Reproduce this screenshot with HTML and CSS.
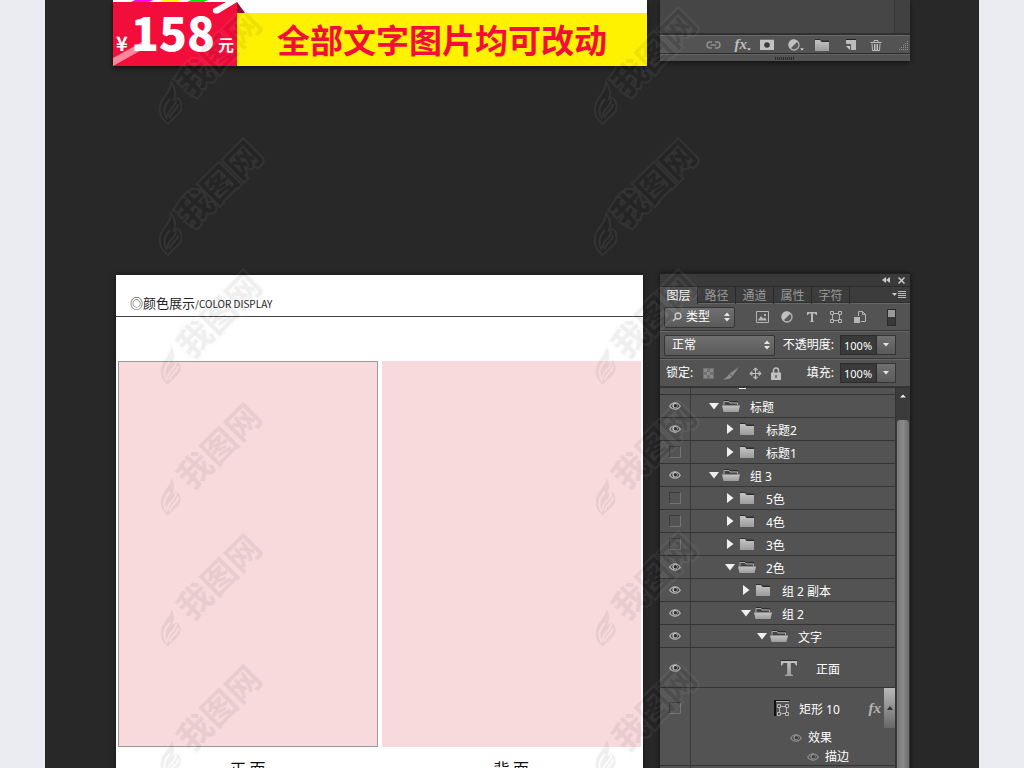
FILE: index.html
```html
<!DOCTYPE html>
<html lang="zh-CN">
<head>
<meta charset="utf-8">
<title>颜色展示</title>
<link rel="stylesheet" href="styles.css">
</head>
<body>
<svg class="defs" aria-hidden="true">
  <defs>
    <linearGradient id="metal" x1="0" y1="0" x2="0" y2="1"><stop offset="0" stop-color="#c4c4c4"/><stop offset="1" stop-color="#9c9c9c"/></linearGradient>
  </defs>
  <symbol id="eye" viewBox="0 0 12 10"><path d="M.7 5.2C3 .6 9 .6 11.3 5.2 9 9 3 9 .7 5.2Z" fill="#4a4a4a" stroke="#b8b8b8" stroke-width="1.200"/><circle cx="6" cy="4.500" r="2.600" fill="#c4c4c4"/><circle cx="6.400" cy="4.800" r="1.700" fill="#2c2c2c"/></symbol>
  <symbol id="box" viewBox="0 0 12 12"><path d="M.5 11.500V.5H11.500" fill="none" stroke="#3c3c3c"/><path d="M11.500 .5V11.500H.5" fill="none" stroke="#747474"/></symbol>
  <symbol id="open" viewBox="0 0 10 10"><path d="M0 2H10L5 8.500Z" fill="#f0f0f0"/></symbol>
  <symbol id="shut" viewBox="0 0 10 10"><path d="M2 0 8.500 5 2 10Z" fill="#f0f0f0"/></symbol>
  <symbol id="folder" viewBox="0 0 18 12"><path d="M2 0H7L8 1.500H16V3H2Z" fill="#2d2d2d"/><path d="M2 1H7L8.500 3H16V12H2Z" fill="url(#metal)"/></symbol>
  <symbol id="folder-open" viewBox="0 0 18 12"><path d="M2 5V1.500H7L8 3H15.500V5" fill="#444" stroke="#aaa"/><path d="M2 .5H7L8 1.500H16" fill="none" stroke="#2d2d2d"/><path d="M0 5.500H18L16.500 12H1.500Z" fill="url(#metal)"/></symbol>
  <symbol id="updown" viewBox="0 0 6 10"><path d="M0 4 3 .5 6 4ZM0 6H6L3 9.500Z" fill="#e6e6e6"/></symbol>
  <symbol id="down" viewBox="0 0 6 4"><path d="M0 0H6L3 3.500Z" fill="#e6e6e6"/></symbol>
  <symbol id="shape" viewBox="0 0 12 12"><g fill="none" stroke="#b5b5b5"><path d="M2.500 3.500V8.500M9.500 3.500V8.500M3.500 2.500H8.500M3.500 9.500H8.500"/><path d="M.5 .5H3.500V3.500H.5ZM8.500 .5H11.500V3.500H8.500ZM.5 8.500H3.500V11.500H.5ZM8.500 8.500H11.500V11.500H8.500Z"/></g></symbol>
  <symbol id="half" viewBox="0 0 12 12"><circle cx="6" cy="6" r="5" fill="#5a5a5a" stroke="#b5b5b5" stroke-width="1.300"/><path d="M9.500 2.500A5 5 0 1 0 2.500 9.500Z" fill="#c0c0c0"/></symbol>
  <symbol id="flame" viewBox="0 0 24 44"><path d="M10 43C3 38 0 31 3 22 6 14 13 11 13 1 17 7 18 13 16 18 20 16 22 18 23 22 26 32 17 34 10 43Z"/><path d="M9 38C4 30 7 23 12 18M10 36C8 28 18 27 18 19M12 37C13 29 20 30 20 23" fill="none"/></symbol>
</svg>

<main class="page">
  <section class="stage intro">
    <div class="banner">
      <div class="price">
        <svg class="price-art" viewBox="0 0 124 66" preserveAspectRatio="none" aria-hidden="true">
          <path d="M0 0H124V66H0Z" fill="#fff"/><path d="M22 0H40L36 2H18Z" fill="#f0f"/><path d="M50 0H68L63 2H46Z" fill="#ff0"/><path d="M78 0H95L91 2H74Z" fill="#0e0"/>
          <path d="M0 2H124V66H0Z" fill="#f20d3b"/><path d="M0 58 29 42 34 47 0 66Z" fill="#fa879c"/><path d="M100 9 113 2H124L106 13Q99 15 100 9Z" fill="#fff"/>
        </svg>
        <p class="amount"><span class="yen">¥</span><strong>158</strong><span class="yuan">元</span></p>
      </div>
      <div class="slogan">
        <svg class="fold" viewBox="0 0 8 13" aria-hidden="true"><path d="M0 2 8 13H0Z" fill="#8f0825"/></svg>
        <p>全部文字图片均可改动</p>
      </div>
    </div>
    <div class="dock">
      <div class="dock-body"><div class="dock-list"></div></div>
      <div class="dock-tools">
        <button aria-label="链接图层"><svg width="15" height="10" viewBox="0 0 15 10" fill="none" stroke="#909090" stroke-width="1.500"><path d="M6 2H4A3 3 0 0 0 4 8H6M9 2H11A3 3 0 0 1 11 8H9M4.500 5H10.500"/></svg></button>
        <button aria-label="图层样式" class="fx">fx<svg class="dot" width="4" height="3" viewBox="0 0 6 4"><use href="#down"/></svg></button>
        <button aria-label="蒙版"><svg width="14" height="11"><path d="M0 0H14V11H0Z" fill="#c2c2c2"/><path d="M0 0H14" stroke="#222"/><circle cx="7" cy="6" r="2.800" fill="#3c3c3c"/></svg></button>
        <button aria-label="调整"><svg width="12" height="12"><use href="#half"/></svg><svg class="dot" width="4" height="3" viewBox="0 0 6 4"><use href="#down"/></svg></button>
        <button aria-label="新建组"><svg width="18" height="12"><use href="#folder"/></svg></button>
        <button aria-label="新建图层"><svg width="12" height="12"><path d="M1 1H11V11H6V5H1Z" fill="#bbb"/><path d="M1 7H5V11Z" fill="#ccc"/><path d="M1 .5H11" stroke="#222"/></svg></button>
        <button aria-label="删除"><svg width="12" height="12" fill="none" stroke="#bbb"><path d="M.5 3.500H11.500M4 3V1.500H8V3M2 4.500 2.500 11.500H9.500L10 4.500M4.500 5V11M6 5V11M7.500 5V11"/></svg></button>
        <svg class="grip" width="10" height="10" stroke="#909090" stroke-dasharray="1 1"><path d="M8 .5H10M6 2.500H10M4 4.500H10M2 6.500H10M0 8.500H10"/></svg>
      </div>
      <div class="dock-foot"><i></i></div>
    </div>
  </section>

  <section class="stage display">
    <article class="card">
      <h1>◎<b>颜色展示</b><span>/COLOR DISPLAY</span></h1>
      <div class="sides">
        <figure><div class="swatch lined"></div><figcaption>正 面</figcaption></figure>
        <figure><div class="swatch"></div><figcaption>背 面</figcaption></figure>
      </div>
    </article>

    <aside class="panel">
      <div class="titlebar">
        <button aria-label="折叠"><svg width="8" height="6" fill="#ccc"><path d="M4 0V6L0 3ZM8 0V6L4 3Z"/></svg></button>
        <button aria-label="关闭"><svg width="7" height="7" stroke="#ccc" stroke-width="1.500"><path d="M.5 .5 6.500 6.500M6.500 .5 .5 6.500"/></svg></button>
      </div>
      <nav class="tabs">
        <button class="on">图层</button><button>路径</button><button>通道</button><button>属性</button><button>字符</button>
        <svg class="menu" width="14" height="8" aria-hidden="true"><path d="M0 2H5L2.500 5Z" fill="#ccc"/><path d="M6 .5H14M6 2.500H14M6 4.500H14M6 6.500H14" stroke="#bbb"/></svg>
      </nav>
      <div class="bar">
        <label class="pick kind"><svg width="10" height="10" fill="none" stroke="#c8c8c8" stroke-width="1.400" aria-hidden="true"><circle cx="6" cy="4" r="3"/><path d="M4 6 1 9"/></svg>
          <select aria-label="筛选类型"><option>类型</option></select><svg width="6" height="10" aria-hidden="true"><use href="#updown"/></svg></label>
        <div class="filters">
          <button aria-label="像素"><svg width="13" height="12"><path d="M.5 .5H12.500V11.500H.5Z" fill="none" stroke="#b5b5b5"/><path d="M2 9 5 5 7 7.500 9 6.500 11 9.500H2ZM8 3H10V5H8Z" fill="#b5b5b5"/></svg></button>
          <button aria-label="调整图层"><svg width="12" height="12"><use href="#half"/></svg></button>
          <button aria-label="文字图层"><svg width="12" height="12"><path d="M1 1H11V4H10L9 2.500H7V10L8.500 11H3.500L5 10V2.500H3L2 4H1Z" fill="#bbb"/></svg></button>
          <button aria-label="形状图层"><svg width="12" height="12"><use href="#shape"/></svg></button>
          <button aria-label="智能对象"><svg width="12" height="13"><path d="M4.500 5V.5H8.500L11.500 3.500V10.500H7M8.500 .5V3.500H11.500" fill="none" stroke="#b5b5b5"/><path d="M0 6H6V12H0Z" fill="#b5b5b5"/></svg></button>
        </div>
        <button class="switch" aria-label="筛选开关"></button>
      </div>
      <div class="bar">
        <label class="pick mode"><select aria-label="混合模式"><option>正常</option></select><svg width="6" height="10" aria-hidden="true"><use href="#updown"/></svg></label>
        <div class="field"><label for="opacity">不透明度:</label><input id="opacity" value="100%"><button aria-label="不透明度选项"><svg width="6" height="4"><use href="#down"/></svg></button></div>
      </div>
      <div class="bar">
        <span class="lock-label">锁定:</span>
        <div class="locks">
          <button aria-label="锁定透明像素"><svg width="11" height="11" fill="#8a8a8a"><path d="M0 0H11V11H0Z" fill="#707070"/><path d="M1 1H4V4H1ZM7 1H10V4H7ZM4 4H7V7H4ZM1 7H4V10H1ZM7 7H10V10H7Z"/></svg></button>
          <button aria-label="锁定图像像素"><svg width="16" height="13"><path d="M16 0 9.500 9 6.500 6.500ZM6 7 9 9.500Q7 13 0 12.500 4 11 6 7Z" fill="#8c8c8c"/></svg></button>
          <button aria-label="锁定位置"><svg width="13" height="13" fill="none" stroke="#c0c0c0"><path d="M6.500 1V12M1 6.500H12M4.500 3 6.500 .800 8.500 3ZM4.500 10 6.500 12.200 8.500 10ZM3 4.500 .8 6.500 3 8.500ZM10 4.500 12.200 6.500 10 8.500Z"/></svg></button>
          <button aria-label="锁定全部"><svg width="10" height="13"><path d="M2.500 6V3.500A2.500 2.500 0 0 1 7.500 3.500V6" fill="none" stroke="#c0c0c0" stroke-width="1.500"/><path d="M0 5.500H10V13H0Z" fill="#c0c0c0"/><path d="M4.500 8H5.500V11H4.500Z" fill="#333"/></svg></button>
        </div>
        <div class="field"><label for="fill">填充:</label><input id="fill" value="100%"><button aria-label="填充选项"><svg width="6" height="4"><use href="#down"/></svg></button></div>
      </div>
      <div class="layers">
        <ul class="list">
          <li class="row cut"><span class="vis"></span><div class="name"><i></i></div></li>
          <li class="row"><button class="vis" aria-label="可见"><svg width="12" height="10"><use href="#eye"/></svg></button><div class="name d1"><svg width="10" height="10"><use href="#open"/></svg><svg width="18" height="12"><use href="#folder-open"/></svg><span>标题</span></div></li>
          <li class="row"><button class="vis" aria-label="可见"><svg width="12" height="10"><use href="#eye"/></svg></button><div class="name d2"><svg width="10" height="10"><use href="#shut"/></svg><svg width="18" height="12"><use href="#folder"/></svg><span>标题2</span></div></li>
          <li class="row"><button class="vis" aria-label="隐藏"><svg width="12" height="12"><use href="#box"/></svg></button><div class="name d2"><svg width="10" height="10"><use href="#shut"/></svg><svg width="18" height="12"><use href="#folder"/></svg><span>标题1</span></div></li>
          <li class="row"><button class="vis" aria-label="可见"><svg width="12" height="10"><use href="#eye"/></svg></button><div class="name d1"><svg width="10" height="10"><use href="#open"/></svg><svg width="18" height="12"><use href="#folder-open"/></svg><span>组 3</span></div></li>
          <li class="row"><button class="vis" aria-label="隐藏"><svg width="12" height="12"><use href="#box"/></svg></button><div class="name d2"><svg width="10" height="10"><use href="#shut"/></svg><svg width="18" height="12"><use href="#folder"/></svg><span>5色</span></div></li>
          <li class="row"><button class="vis" aria-label="隐藏"><svg width="12" height="12"><use href="#box"/></svg></button><div class="name d2"><svg width="10" height="10"><use href="#shut"/></svg><svg width="18" height="12"><use href="#folder"/></svg><span>4色</span></div></li>
          <li class="row"><button class="vis" aria-label="隐藏"><svg width="12" height="12"><use href="#box"/></svg></button><div class="name d2"><svg width="10" height="10"><use href="#shut"/></svg><svg width="18" height="12"><use href="#folder"/></svg><span>3色</span></div></li>
          <li class="row"><button class="vis" aria-label="可见"><svg width="12" height="10"><use href="#eye"/></svg></button><div class="name d2"><svg width="10" height="10"><use href="#open"/></svg><svg width="18" height="12"><use href="#folder-open"/></svg><span>2色</span></div></li>
          <li class="row"><button class="vis" aria-label="可见"><svg width="12" height="10"><use href="#eye"/></svg></button><div class="name d3"><svg width="10" height="10"><use href="#shut"/></svg><svg width="18" height="12"><use href="#folder"/></svg><span>组 2 副本</span></div></li>
          <li class="row"><button class="vis" aria-label="可见"><svg width="12" height="10"><use href="#eye"/></svg></button><div class="name d3"><svg width="10" height="10"><use href="#open"/></svg><svg width="18" height="12"><use href="#folder-open"/></svg><span>组 2</span></div></li>
          <li class="row"><button class="vis" aria-label="可见"><svg width="12" height="10"><use href="#eye"/></svg></button><div class="name d4"><svg width="10" height="10"><use href="#open"/></svg><svg width="18" height="12"><use href="#folder-open"/></svg><span>文字</span></div></li>
          <li class="row tall"><button class="vis" aria-label="可见"><svg width="12" height="10"><use href="#eye"/></svg></button><div class="name text-layer"><svg width="16" height="16"><path d="M0 1H16V5.500H15L13.500 3H9.800V14L12 15V16H4V15L6.200 14V3H2.500L1 5.500H0Z" fill="url(#metal)"/><path d="M0 .5H16" stroke="#2d2d2d"/></svg><span>正面</span></div></li>
          <li class="row styled"><button class="vis" aria-label="隐藏"><svg width="12" height="12"><use href="#box"/></svg></button>
            <div class="stack">
              <div class="name shape-layer"><svg width="16" height="16"><path d="M0 0H16V1H2V16H0Z" fill="#111"/><path d="M2 1.500H15" stroke="#bbb"/><svg x="3" y="4" width="12" height="12"><use href="#shape"/></svg></svg><span>矩形 10</span><em>fx</em><button class="fold-fx" aria-label="收起效果"><svg width="6" height="4"><path d="M0 4H6L3 0Z" fill="#333"/></svg></button></div>
              <div class="effect e1"><svg width="12" height="10"><use href="#eye"/></svg><span>效果</span></div>
              <div class="effect e2"><svg width="12" height="10"><use href="#eye"/></svg><span>描边</span></div>
            </div></li>
          <li class="row"><span class="vis"></span></li>
        </ul>
        <div class="scroll"><button aria-label="向上滚动"><svg width="6" height="4"><path d="M0 3.500H6L3 .5Z" fill="#eee"/></svg></button><div class="thumb"></div></div>
      </div>
    </aside>
  </section>

  <div class="marks" aria-hidden="true">
    <div class="mark"><svg width="24" height="44"><use href="#flame"/></svg><span>我图网</span></div><div class="mark"><svg width="24" height="44"><use href="#flame"/></svg><span>我图网</span></div>
    <div class="mark"><svg width="24" height="44"><use href="#flame"/></svg><span>我图网</span></div><div class="mark"><svg width="24" height="44"><use href="#flame"/></svg><span>我图网</span></div>
    <div class="mark"><svg width="24" height="44"><use href="#flame"/></svg><span>我图网</span></div><div class="mark"><svg width="24" height="44"><use href="#flame"/></svg><span>我图网</span></div>
    <div class="mark"><svg width="24" height="44"><use href="#flame"/></svg><span>我图网</span></div><div class="mark"><svg width="24" height="44"><use href="#flame"/></svg><span>我图网</span></div>
    <div class="mark"><svg width="24" height="44"><use href="#flame"/></svg><span>我图网</span></div><div class="mark"><svg width="24" height="44"><use href="#flame"/></svg><span>我图网</span></div>
    <div class="mark"><svg width="24" height="44"><use href="#flame"/></svg><span>我图网</span></div><div class="mark"><svg width="24" height="44"><use href="#flame"/></svg><span>我图网</span></div>
  </div>
</main>
</body>
</html>
```
FILE: styles.css
```css
* { box-sizing: border-box; margin: 0; padding: 0; }
body { background: #ebecf1; font: 12px/16px "Noto Sans", "Noto Sans CJK SC", sans-serif; color: #fff; }
button, select, input { font: inherit; color: inherit; border: 0; background: none; appearance: none; border-radius: 0; }
svg { display: block; flex: none; }
ul { list-style: none; }
.defs { position: absolute; width: 0; height: 0; }

.page { position: relative; height: 100vh; margin: 0 45px; background: #282828; overflow: hidden; }
.stage { display: grid; grid-template-columns: minmax(0, 534fr) minmax(0, 250fr); gap: 13px; align-items: start; padding: 0 69px 0 68px; }
.intro { min-height: 273px; }

/* price banner */
.banner { display: grid; grid-template-columns: 124px 1fr; grid-template-rows: 66px; box-shadow: 0 2px 5px rgba(0, 0, 0, .6); }
.price { position: relative; }
.price-art { position: absolute; inset: 0; width: 100%; height: 100%; }
.amount { position: relative; display: flex; align-items: baseline; padding: 0 3px; font-family: "Noto Sans CJK SC", sans-serif; font-weight: 700; line-height: 62px; }
.amount span { line-height: 24px; }
.amount strong { font-size: 46px; flex: 1; text-align: center; }
.yen { font-size: 20px; }
.yuan { font-size: 16px; }
.slogan { position: relative; background: #fff; padding-top: 13px; }
.slogan p { background: #fff200; color: #f20d3b; height: 53px; font: 700 33px/53px "Noto Sans CJK SC", sans-serif; text-align: center; white-space: nowrap; }
.fold { position: absolute; left: 0; top: 0; width: 8px; height: 13px; }

/* panel bottom edge */
.dock { background: #535353; box-shadow: 0 2px 5px rgba(0, 0, 0, .5); }
.dock-body { height: 35px; padding-right: 15px; background: #414141; border-bottom: 2px solid #303030; }
.dock-list { height: 33px; background: #464646; border-right: 1px solid #393939; }
.dock-tools { position: relative; display: flex; align-items: center; height: 19px; padding: 0 28px 0 46px; justify-content: space-between; border-top: 1px solid #686868; border-bottom: 1px solid #2c2c2c; }
.dock-tools button { display: flex; align-items: center; justify-content: center; position: relative; height: 17px; }
.dock-tools .fx { font: italic 700 15px/17px "Liberation Serif", serif; color: #c0c0c0; }
.dot { position: absolute; right: -4px; bottom: 2px; }
.grip { position: absolute; right: 1px; bottom: 2px; }
.dock-foot { display: flex; justify-content: center; align-items: center; height: 7px; border-top: 1px solid #626262; }
.dock-foot i { width: 20px; height: 3px; background: repeating-linear-gradient(90deg, #2a2a2a 0 1px, transparent 1px 2px); }

/* colour card */
.card { margin: 2px 4px 0 3px; background: #fff; color: #222; box-shadow: 0 0 5px rgba(0, 0, 0, .5); }
.card h1 { height: 42px; padding: 18px 0 0 14px; border-bottom: 1px solid #444; font: 400 13px/20px "Noto Sans CJK SC", sans-serif; white-space: nowrap; }
.card h1 b { font-weight: 400; }
.card h1 span { font-size: 10px; }
.sides { display: grid; grid-template-columns: 1fr 1fr; gap: 4px; padding: 44px 2px 0; }
.swatch { height: 386px; background: #f9dadc; }
.lined { border: 1px solid #999; }
figcaption { padding-top: 9px; text-align: center; font: 400 16px/24px "Noto Sans CJK SC", sans-serif; color: #111; }

/* layers panel */
.panel { background: #535353; box-shadow: 0 0 5px rgba(0, 0, 0, .6); }
.titlebar { display: flex; justify-content: flex-end; align-items: center; gap: 8px; height: 13px; padding-right: 5px; background: #3a3a3a; border-top: 1px solid #222; }
.tabs { display: flex; height: 17px; background: #3c3c3c; border-top: 1px solid #2a2a2a; border-bottom: 1px solid #303030; }
.tabs button { width: 38px; height: 17px; line-height: 17px; color: #999; border-right: 1px solid #2a2a2a; }
.tabs .on { background: #535353; color: #fff; }
.menu { margin: 4px 4px 0 auto; }
.bar { display: flex; align-items: center; justify-content: space-between; height: 28px; padding: 0 14px 0 4px; border-top: 1px solid #666; border-bottom: 1px solid #373737; }
.pick { display: flex; align-items: center; height: 21px; padding: 0 4px 0 7px; border: 1px solid #343434; border-radius: 2px; background: linear-gradient(#707070, #5a5a5a); }
.pick select { flex: 1; min-width: 0; line-height: 18px; }
.kind { width: 71px; gap: 4px; }
.mode { width: 111px; }
.filters, .locks { display: flex; align-items: center; justify-content: space-between; }
.filters { width: 110px; }
.filters svg, .locks svg { margin: auto; }
.switch { width: 9px; height: 17px; border: 1px solid #2c2c2c; background: linear-gradient(#9a9a9a 0 7px, #383838 7px); }
.field { display: flex; align-items: center; height: 20px; white-space: nowrap; }
.field label { margin-right: 6px; }
.field input { width: 37px; height: 20px; padding-left: 3px; background: #3a3a3a; border: 1px solid #2c2c2c; font-size: 11px; }
.field button { display: grid; place-items: center; width: 19px; height: 20px; border: 1px solid #343434; border-left: 0; background: linear-gradient(#707070, #5a5a5a); }
.lock-label { padding-left: 2px; }
.locks { width: 78px; margin-right: 16px; }

.layers { display: grid; grid-template-columns: 1fr 15px; border-top: 1px solid #333; }
.row { display: grid; grid-template-columns: 31px 1fr; height: 23px; border-bottom: 1px solid #343434; }
.cut { height: 7px; }
.cut .name { align-items: flex-start; padding-left: 48px; }
.cut i { width: 7px; height: 1px; background: #fff; }
.vis { display: grid; place-items: center; border-right: 1px solid #3a3a3a; }
.name { display: flex; align-items: center; white-space: nowrap; }
.name svg + svg { margin: 0 10px 0 3px; }
.name span { padding-top: 4px; }
.d1 { padding-left: 18px; }
.d2 { padding-left: 34px; }
.d3 { padding-left: 50px; }
.d4 { padding-left: 66px; }
.tall { height: 40px; }
.text-layer { padding-left: 90px; gap: 19px; }
.styled { height: 78px; }
.styled .vis { padding-bottom: 38px; }
.shape-layer { height: 40px; padding-left: 83px; gap: 9px; }
.shape-layer em { margin-left: auto; font: italic 700 15px/16px "Liberation Serif", serif; color: #b4b4b4; }
.shape-layer em + button { margin-left: -6px; }
.fold-fx { display: grid; place-items: center; width: 11px; height: 40px; background: linear-gradient(#b8b8b8, #686868); }
.effect { display: flex; align-items: center; gap: 6px; height: 19px; }
.effect svg { opacity: .6; }
.e1 { padding-left: 99px; }
.e2 { padding-left: 116px; }
.scroll { background: #3b3b3b; border-left: 1px solid #333; }
.scroll button { display: grid; place-items: center; width: 100%; height: 16px; }
.thumb { height: 400px; margin: 16px 1px 0; border-radius: 3px 3px 0 0; background: linear-gradient(90deg, #777, #8a8a8a, #6c6c6c); }

/* watermark overlay */
.marks { position: absolute; left: 108px; top: 8px; display: grid; grid-template-columns: 435px 435px; grid-auto-rows: 131px; pointer-events: none; }
.mark { position: relative; width: 120px; height: 120px; opacity: .06; }
.mark svg { position: absolute; left: 5px; bottom: 3px; fill: #000; stroke: #ddd; stroke-width: 2; }
.mark span { position: absolute; left: 14px; top: 27px; width: 102px; font: 700 34px/34px "Noto Sans CJK SC", sans-serif; color: #000; -webkit-text-stroke: 4px #ddd; paint-order: stroke fill; transform: rotate(-45deg); white-space: nowrap; }
```
